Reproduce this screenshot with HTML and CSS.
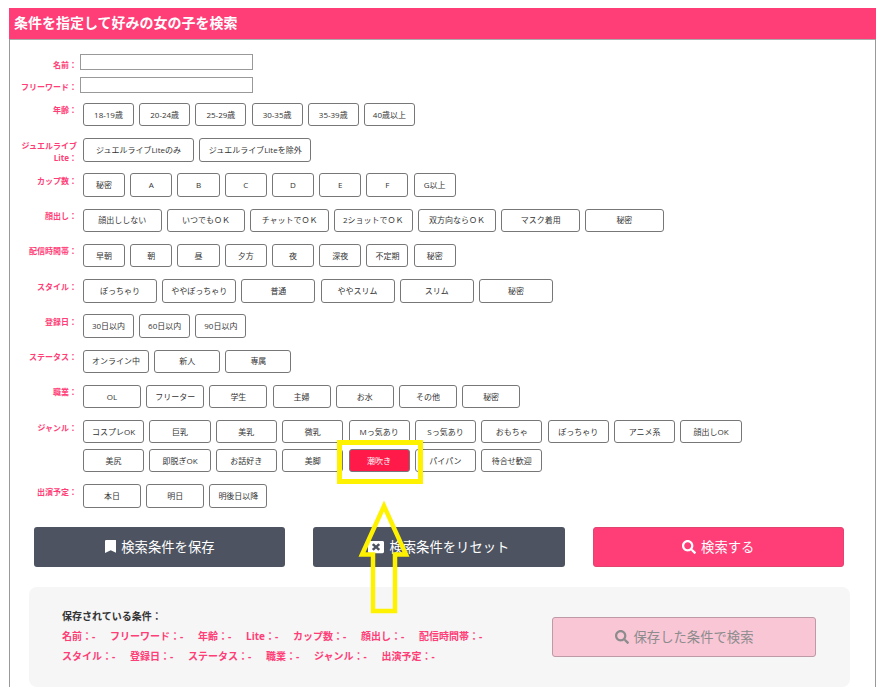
FILE: index.html
```html
<!DOCTYPE html>
<html lang="ja">
<head>
<meta charset="utf-8">
<title>検索</title>
<link rel="stylesheet" href="styles.css">
</head>
<body>
<section class="panel">
  <h2 class="panel-title">条件を指定して好みの女の子を検索</h2>
  <form class="search-form">
    <div class="text-rows">
      <div class="row"><span class="row-label">名前：</span><input class="text-input" type="text"></div>
      <div class="row"><span class="row-label">フリーワード：</span><input class="text-input" type="text"></div>
    </div>
    <div class="chip-rows">
      <div class="row"><span class="row-label">年齢：</span>
        <div class="chips w-age"><button type="button" class="chip">18-19歳</button><button type="button" class="chip">20-24歳</button><button type="button" class="chip">25-29歳</button><button type="button" class="chip">30-35歳</button><button type="button" class="chip">35-39歳</button><button type="button" class="chip">40歳以上</button></div></div>
      <div class="row"><span class="row-label">ジュエルライブLite：</span>
        <div class="chips w-lite"><button type="button" class="chip">ジュエルライブLiteのみ</button><button type="button" class="chip">ジュエルライブLiteを除外</button></div></div>
      <div class="row"><span class="row-label">カップ数：</span>
        <div class="chips w-small"><button type="button" class="chip">秘密</button><button type="button" class="chip">A</button><button type="button" class="chip">B</button><button type="button" class="chip">C</button><button type="button" class="chip">D</button><button type="button" class="chip">E</button><button type="button" class="chip">F</button><button type="button" class="chip">G以上</button></div></div>
      <div class="row"><span class="row-label">顔出し：</span>
        <div class="chips w-face"><button type="button" class="chip">顔出ししない</button><button type="button" class="chip">いつでもＯＫ</button><button type="button" class="chip">チャットでＯＫ</button><button type="button" class="chip">2ショットでＯＫ</button><button type="button" class="chip">双方向ならＯＫ</button><button type="button" class="chip">マスク着用</button><button type="button" class="chip">秘密</button></div></div>
      <div class="row"><span class="row-label">配信時間帯：</span>
        <div class="chips w-small"><button type="button" class="chip">早朝</button><button type="button" class="chip">朝</button><button type="button" class="chip">昼</button><button type="button" class="chip">夕方</button><button type="button" class="chip">夜</button><button type="button" class="chip">深夜</button><button type="button" class="chip">不定期</button><button type="button" class="chip">秘密</button></div></div>
      <div class="row"><span class="row-label">スタイル：</span>
        <div class="chips w-style"><button type="button" class="chip">ぽっちゃり</button><button type="button" class="chip">ややぽっちゃり</button><button type="button" class="chip">普通</button><button type="button" class="chip">ややスリム</button><button type="button" class="chip">スリム</button><button type="button" class="chip">秘密</button></div></div>
      <div class="row"><span class="row-label">登録日：</span>
        <div class="chips w-age"><button type="button" class="chip">30日以内</button><button type="button" class="chip">60日以内</button><button type="button" class="chip">90日以内</button></div></div>
      <div class="row"><span class="row-label">ステータス：</span>
        <div class="chips w-status"><button type="button" class="chip">オンライン中</button><button type="button" class="chip">新人</button><button type="button" class="chip">専属</button></div></div>
      <div class="row"><span class="row-label">職業：</span>
        <div class="chips w-job"><button type="button" class="chip">OL</button><button type="button" class="chip">フリーター</button><button type="button" class="chip">学生</button><button type="button" class="chip">主婦</button><button type="button" class="chip">お水</button><button type="button" class="chip">その他</button><button type="button" class="chip">秘密</button></div></div>
      <div class="row"><span class="row-label">ジャンル：</span>
        <div class="chips w-genre"><button type="button" class="chip">コスプレOK</button><button type="button" class="chip">巨乳</button><button type="button" class="chip">美乳</button><button type="button" class="chip">微乳</button><button type="button" class="chip">Mっ気あり</button><button type="button" class="chip">Sっ気あり</button><button type="button" class="chip">おもちゃ</button><button type="button" class="chip">ぽっちゃり</button><button type="button" class="chip">アニメ系</button><button type="button" class="chip">顔出しOK</button><button type="button" class="chip">美尻</button><button type="button" class="chip">即脱ぎOK</button><button type="button" class="chip">お話好き</button><button type="button" class="chip">美脚</button><button type="button" class="chip is-active">潮吹き</button><button type="button" class="chip">パイパン</button><button type="button" class="chip">待合せ歓迎</button></div></div>
      <div class="row"><span class="row-label">出演予定：</span>
        <div class="chips w-job"><button type="button" class="chip">本日</button><button type="button" class="chip">明日</button><button type="button" class="chip">明後日以降</button></div></div>
    </div>
    <div class="actions">
      <button type="button" class="action action-dark"><svg class="icon icon-bookmark" viewBox="0 0 384 512" preserveAspectRatio="none"><path d="M0 512V48C0 21.49 21.49 0 48 0h288c26.51 0 48 21.49 48 48v464L192 400 0 512z"/></svg>検索条件を保存</button>
      <button type="button" class="action action-dark"><svg class="icon icon-close" viewBox="0 0 512 512" preserveAspectRatio="none"><path d="M464 32H48C21.5 32 0 53.5 0 80v352c0 26.5 21.5 48 48 48h416c26.5 0 48-21.5 48-48V80c0-26.5-21.5-48-48-48zm-83.6 290.5c4.8 4.8 4.8 12.6 0 17.4l-40.5 40.5c-4.8 4.8-12.6 4.8-17.4 0L256 313.3l-66.5 67.1c-4.8 4.8-12.6 4.8-17.4 0l-40.5-40.5c-4.8-4.8-4.8-12.6 0-17.4l67.1-66.5-67.1-66.5c-4.8-4.8-4.8-12.6 0-17.4l40.5-40.5c4.8-4.8 12.6-4.8 17.4 0l66.5 67.1 66.5-67.1c4.8-4.8 12.6-4.8 17.4 0l40.5 40.5c4.8 4.8 4.8 12.6 0 17.4L313.3 256l67.1 66.5z"/></svg>検索条件をリセット</button>
      <button type="button" class="action action-pink"><svg class="icon" viewBox="0 0 512 512"><path d="M505 442.7L405.3 343c-4.5-4.5-10.6-7-17-7H372c27.6-35.3 44-79.7 44-128C416 93.1 322.9 0 208 0S0 93.1 0 208s93.1 208 208 208c48.3 0 92.7-16.4 128-44v16.3c0 6.4 2.5 12.5 7 17l99.7 99.7c9.4 9.4 24.6 9.4 33.9 0l28.3-28.3c9.4-9.4 9.4-24.6.1-34zM208 336c-70.7 0-128-57.2-128-128 0-70.7 57.2-128 128-128 70.7 0 128 57.2 128 128 0 70.7-57.2 128-128 128z"/></svg>検索する</button>
    </div>
    <div class="saved">
      <div class="saved-info">
        <p class="saved-title">保存されている条件：</p>
        <ul class="saved-list">
          <li>名前：-</li><li>フリーワード：-</li><li>年齢：-</li><li>Lite：-</li><li>カップ数：-</li><li>顔出し：-</li><li>配信時間帯：-</li>
        </ul>
        <ul class="saved-list">
          <li>スタイル：-</li><li>登録日：-</li><li>ステータス：-</li><li>職業：-</li><li>ジャンル：-</li><li>出演予定：-</li>
        </ul>
      </div>
      <button type="button" class="action action-disabled"><svg class="icon" viewBox="0 0 512 512"><path d="M505 442.7L405.3 343c-4.5-4.5-10.6-7-17-7H372c27.6-35.3 44-79.7 44-128C416 93.1 322.9 0 208 0S0 93.1 0 208s93.1 208 208 208c48.3 0 92.7-16.4 128-44v16.3c0 6.4 2.5 12.5 7 17l99.7 99.7c9.4 9.4 24.6 9.4 33.9 0l28.3-28.3c9.4-9.4 9.4-24.6.1-34zM208 336c-70.7 0-128-57.2-128-128 0-70.7 57.2-128 128-128 70.7 0 128 57.2 128 128 0 70.7-57.2 128-128 128z"/></svg>保存した条件で検索</button>
    </div>
  </form>
</section>
<div class="mark-box"></div>
<svg class="mark-arrow" viewBox="0 0 60 120"><polygon points="27,8 5,56.5 16,56.5 16,113 38,113 38,56.5 49,56.5"/></svg>
</body>
</html>
```
FILE: styles.css
```css
* { box-sizing: border-box; }
html, body { margin: 0; padding: 0; background: #fff; }
body {
  height: 693px;
  overflow: hidden;
  position: relative;
  font-family: "Open Sans", "Noto Sans CJK JP", sans-serif;
  color: #333;
}
.panel {
  width: 867px;
  margin: 8px 0 0 9px;
  border-left: 1px solid #999;
  border-right: 1px solid #999;
}
.panel-title {
  margin: 0 -1px;
  height: 31px;
  padding-left: 5px;
  background: #ff3d77;
  color: #fff;
  font-size: 14px;
  font-weight: 700;
  line-height: 30px;
}
.search-form { border-top: 1px solid #aaa; padding-top: 14px; }
.text-rows { display: flex; flex-direction: column; gap: 6.6px; }
.row { display: grid; grid-template-columns: 67px 1fr; column-gap: 3px; align-items: start; }
.row-label {
  color: #ff3d77;
  font-size: 8px;
  font-weight: 700;
  line-height: 12px;
  text-align: right;
  padding-top: 1.5px;
  margin-bottom: -4px;
}
.text-rows .row-label { padding-top: 4.5px; }
.text-input {
  width: 173px;
  height: 16.4px;
  padding: 0;
  border: 1px solid #999;
  background: #fff;
  display: block;
}
.chip-rows {
  display: flex;
  flex-direction: column;
  gap: 11.85px;
  margin-top: 9.6px;
}
.chips {
  display: flex;
  flex-wrap: wrap;
  gap: 5.6px 5.2px;
  padding-left: 3px;
}
.chip {
  height: 23.4px;
  padding: 0;
  border: 1px solid #777;
  border-radius: 3px;
  background: #fff;
  color: #333;
  font-family: inherit;
  font-size: 8px;
  line-height: 1;
}
.chip.is-active { background: #ff1a4a; color: #fff; }
.w-age .chip { width: 51px; }
.w-small .chip { width: 42.05px; }
.w-face .chip { width: 78.5px; }
.w-style .chip { width: 74px; }
.w-status .chip { width: 66px; }
.w-job .chip { width: 58px; }
.w-genre .chip { width: 61.2px; }
.w-genre { max-width: 670px; }
.w-lite .chip { width: 111px; }
.w-lite .chip:last-child { width: 112px; }
.actions {
  display: flex;
  gap: 28px;
  margin: 19px 0 0 24px;
}
.action {
  height: 40px;
  display: flex;
  align-items: center;
  justify-content: center;
  gap: 5px;
  border: 1px solid transparent;
  border-radius: 3px;
  font-family: inherit;
  font-size: 13.33px;
  color: #fff;
  padding: 0;
}
.actions .action { width: 251.3px; }
.action-dark { background: #4d5360; }
.action-pink { background: #ff3d77; border-color: #e0446f; }
.icon { width: 14px; height: 14px; fill: currentColor; flex: none; }
.icon-bookmark { width: 11.5px; height: 13px; }
.icon-close { width: 16px; }
.saved {
  display: flex;
  align-items: center;
  justify-content: space-between;
  height: 100px;
  margin: 20px 0 0 19px;
  width: 821px;
  padding: 0 34px 0 33px;
  background: #f6f6f6;
  border-radius: 8px;
}
.saved-info { padding-bottom: 2px; }
.saved-title {
  margin: 0 0 6px;
  font-size: 10px;
  font-weight: 700;
  line-height: 14px;
  color: #333;
}
.saved-list {
  display: flex;
  gap: 14.8px;
  margin: 0 0 6px;
  padding: 0;
  list-style: none;
  font-size: 10px;
  font-weight: 700;
  line-height: 14px;
  color: #ff3d77;
}
.saved-list:last-child { margin-bottom: 0; }
.action-disabled {
  width: 264px;
  background: #f9c6d6;
  border-color: #bd9aa6;
  color: #8c8c8c;
}
.mark-box {
  position: absolute;
  left: 337px;
  top: 440px;
  width: 86px;
  height: 44px;
  border: 5px solid #fff200;
}
.mark-arrow {
  position: absolute;
  left: 357px;
  top: 498px;
  width: 60px;
  height: 120px;
  fill: none;
  stroke: #fff200;
  stroke-width: 4.5;
}
```
